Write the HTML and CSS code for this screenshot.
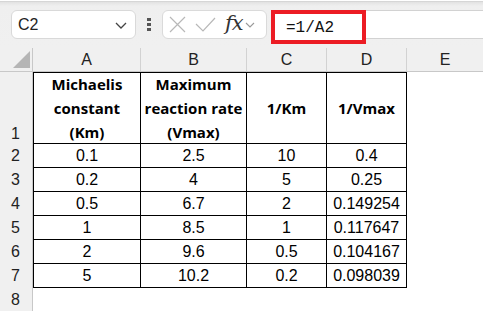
FILE: index.html
```html
<!DOCTYPE html>
<html lang="en">
<head>
    <meta charset="UTF-8">
    <meta name="viewport" content="width=device-width, initial-scale=1.0">
    <title>Lineweaver-Burk sheet</title>
    <link rel="stylesheet" href="styles.css">
</head>
<body>
    <div class="topline"></div>
    <header class="formula-bar">
        <div class="name-box">
            <span>C2</span>
            <svg width="12" height="7" viewBox="0 0 12 7"><path d="M1 1 L6 6 L11 1" fill="none" stroke="#444" stroke-width="1.3"/></svg>
        </div>
        <div class="dots"><i></i><i></i><i></i></div>
        <div class="fx-group">
            <svg width="17" height="17" viewBox="0 0 17 17"><path d="M1 1 L16 16 M16 1 L1 16" stroke="#b8b8b8" stroke-width="1.2"/></svg>
            <svg width="21" height="17" viewBox="0 0 21 17"><path d="M1 8 L8 15 L20 2" fill="none" stroke="#b8b8b8" stroke-width="1.2"/></svg>
            <span class="fx">fx</span>
            <svg width="10" height="6" viewBox="0 0 10 6"><path d="M1 1 L5 5 L9 1" fill="none" stroke="#999" stroke-width="1.1"/></svg>
        </div>
        <div class="formula-input">
            <div class="highlight">=1/A2</div>
        </div>
    </header>

    <main class="sheet">
        <div class="corner">
            <svg width="17" height="17" viewBox="0 0 17 17"><path d="M17 0 L17 17 L0 17 Z" fill="#b5b5b5"/></svg>
        </div>
        <div class="col-head">A</div>
        <div class="col-head">B</div>
        <div class="col-head">C</div>
        <div class="col-head">D</div>
        <div class="col-head last">E</div>

        <div class="row-head bottom">1</div>
        <div class="cell head first-row first-col">Michaelis<br>constant<br>(Km)</div>
        <div class="cell head first-row">Maximum<br>reaction rate<br>(Vmax)</div>
        <div class="cell head first-row">1/Km</div>
        <div class="cell head first-row">1/Vmax</div>
        <div class="empty"></div>

        <div class="row-head">2</div>
        <div class="cell first-col">0.1</div><div class="cell">2.5</div><div class="cell">10</div><div class="cell">0.4</div><div class="empty"></div>
        <div class="row-head">3</div>
        <div class="cell first-col">0.2</div><div class="cell">4</div><div class="cell">5</div><div class="cell">0.25</div><div class="empty"></div>
        <div class="row-head">4</div>
        <div class="cell first-col">0.5</div><div class="cell">6.7</div><div class="cell">2</div><div class="cell">0.149254</div><div class="empty"></div>
        <div class="row-head">5</div>
        <div class="cell first-col">1</div><div class="cell">8.5</div><div class="cell">1</div><div class="cell">0.117647</div><div class="empty"></div>
        <div class="row-head">6</div>
        <div class="cell first-col">2</div><div class="cell">9.6</div><div class="cell">0.5</div><div class="cell">0.104167</div><div class="empty"></div>
        <div class="row-head">7</div>
        <div class="cell first-col">5</div><div class="cell">10.2</div><div class="cell">0.2</div><div class="cell">0.098039</div><div class="empty"></div>
        <div class="row-head">8</div>
    </main>
</body>
</html>
```
FILE: styles.css
```css
*{
    box-sizing: border-box;
}

body{
    margin: 0;
    font-family: "Liberation Sans", Arial, sans-serif;
    background-color: #f0f0f0;
    overflow: hidden;
    height: 311px;
}

.topline{
    height: 2px;
    background: #fff;
    border-bottom: 1px solid #d6d6d6;
}

.formula-bar{
    display: flex;
    align-items: center;
    height: 45px;
    padding-left: 11px;
    background: linear-gradient(#e2e2e2, #efefef 4px, #f0f0f0);
}

.name-box{
    width: 125px;
    height: 29px;
    background: #fff;
    border: 1px solid #d9d9d9;
    border-radius: 6px;
    display: flex;
    align-items: center;
    justify-content: space-between;
    padding: 0 8px 0 6px;
    font-size: 16px;
    color: #222;

    svg{
        margin-top: 1px;
    }
}

.dots{
    display: flex;
    flex-direction: column;
    gap: 2px;
    margin: 0 11px 0 11px;

    i{
        display: block;
        width: 4px;
        height: 3px;
        background: #555;
    }
}

.fx-group{
    width: 105px;
    height: 29px;
    background: #fff;
    border: 1px solid #dadada;
    border-radius: 6px;
    display: flex;
    align-items: center;
    padding-left: 6px;
    gap: 9px;

    .fx{
        font-family: "DejaVu Serif", "Liberation Serif", serif;
        font-style: italic;
        font-size: 21px;
        line-height: 1;
        color: #333;
        margin-left: 0;
        margin-right: -7px;
        margin-top: -3px;
        letter-spacing: -1px;
    }
}

.formula-input{
    flex: 1;
    align-self: flex-start;
    margin-top: 8px;
    margin-left: 4px;
    height: 29px;
    background: #fff;
    border-top: 1px solid #d2d2d2;
    border-bottom: 1px solid #d2d2d2;
}

.highlight{
    width: 95px;
    height: 34px;
    margin-top: -1px;
    border: 4px solid #ec1c24;
    background: #fff;
    font-family: "Liberation Mono", monospace;
    font-size: 16px;
    color: #111;
    padding: 5px 0 0 11px;
}

.sheet{
    display: grid;
    grid-template-columns: 33px 108px 106px 80px 80px 1fr;
    grid-template-rows: 24px 72px repeat(7, 24px);
    background: #fff;
    margin-top: 1px;
    color: #000;
}

.corner{
    background: #f0f0f0;
    border-right: 1px solid #c8c8c8;
    border-bottom: 1px solid #c8c8c8;
    display: flex;
    align-items: flex-end;
    justify-content: flex-end;
    padding: 0 2px 3px 0;
}

.col-head{
    background: #f0f0f0;
    border-right: 1px solid #d2d2d2;
    border-bottom: 1px solid #c8c8c8;
    text-align: center;
    font-size: 16px;
    line-height: 24px;
    color: #222;

    &.last{
        border-right: 0;
    }
}

.row-head{
    background: #f0f0f0;
    border-right: 1px solid #c8c8c8;
    display: flex;
    align-items: center;
    justify-content: center;
    font-size: 16px;
    color: #222;
    padding-right: 1px;

    &.bottom{
        align-items: flex-end;
        padding-bottom: 1px;
    }
}

.cell{
    border-right: 1px solid #000;
    border-bottom: 1px solid #000;
    display: flex;
    align-items: center;
    justify-content: center;
    text-align: center;
    font-size: 16px;

    &.first-row{
        border-top: 1px solid #000;
    }

    &.first-col{
        border-left: 1px solid #000;
    }

    &.head{
        font-family: "Open Sans", sans-serif;
        font-weight: 700;
        font-size: 15px;
        line-height: 24px;
        padding: 0 2px;
        white-space: nowrap;
    }
}

.empty{
    background: #fff;
}
```
